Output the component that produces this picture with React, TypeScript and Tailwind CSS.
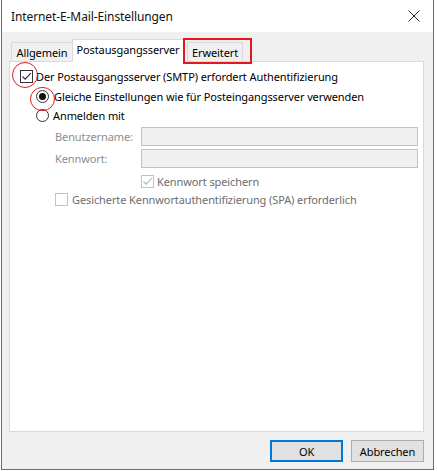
import React from "react";

const font = { fontFamily: '"Noto Sans", "Open Sans", sans-serif' };

function Check({ color = "#333" }: { color?: string }) {
  return (
    <svg width="11" height="11" viewBox="0 0 11 11" className="block">
      <path d="M1.5 5.5 L4.2 8.2 L9.8 2.2" fill="none" stroke={color} strokeWidth="1.2" />
    </svg>
  );
}

export default function App() {
  return (
    <div className="w-[437px] h-[472px] bg-white relative text-[11px] tracking-[-0.1px] text-black" style={font}>
      <div className="ml-[1px] w-[433px] h-[470px] border-x border-b border-[#2b7bd0] flex flex-col">
        {/* title bar */}
        <div className="h-[32px] bg-white flex items-center justify-between pl-[9px] pr-[10px] shrink-0">
          <span className="text-[12px] leading-none mt-[1px] text-[#111]">Internet-E-Mail-Einstellungen</span>
          <svg width="12" height="12" viewBox="0 0 12 12" className="mr-[3px]">
            <path d="M0.5 0.5 L11.5 11.5 M11.5 0.5 L0.5 11.5" stroke="#222" strokeWidth="1" />
          </svg>
        </div>
        {/* body */}
        <div className="flex-1 bg-[#f0f0f0] flex flex-col pl-[7px] pr-[9px]">
          {/* tabs */}
          <div className="h-[29px] flex items-end pl-[2px] relative z-10">
            <div className="h-[19px] w-[62px] border border-b-0 border-[#d9d9d9] bg-[#f0f0f0] flex items-center justify-center">
              <span className="leading-none">Allgemein</span>
            </div>
            <div className="h-[23px] w-[112px] -ml-[1px] border border-b-0 border-[#d9d9d9] bg-white flex items-start justify-center -mb-[1px] pt-[4px]">
              <span className="leading-none">Postausgangsserver</span>
            </div>
            <div className="h-[19px] w-[56px] ml-[3px] border border-b-0 border-[#d9d9d9] bg-[#f0f0f0] flex items-center justify-center relative">
              <span className="leading-none">Erweitert</span>
              <div className="absolute -left-[5px] -top-[5px] w-[69px] h-[26px] border-2 border-[#e3191f]" />
            </div>
          </div>
          {/* panel */}
          <div className="h-[371px] border border-[#d9d9d9] bg-white relative pl-[10px] pt-[4px]">
            <div className="h-[20px] flex items-center">
              <div className="w-[13px] h-[13px] border border-[#333] bg-white flex items-center justify-center">
                <Check />
              </div>
              <span className="ml-[3px] leading-none">Der Postausgangsserver (SMTP) erfordert Authentifizierung</span>
            </div>
            <div className="h-[20px] flex items-center pl-[16px]">
              <div className="w-[13px] h-[13px] rounded-full border border-[#333] bg-white flex items-center justify-center">
                <div className="w-[7px] h-[7px] rounded-full bg-[#111]" />
              </div>
              <span className="ml-[5px] leading-none">Gleiche Einstellungen wie für Posteingangsserver verwenden</span>
            </div>
            <div className="h-[19px] flex items-center pl-[16px]">
              <div className="w-[13px] h-[13px] rounded-full border border-[#333] bg-white" />
              <span className="ml-[4px] leading-none">Anmelden mit</span>
            </div>
            <div className="flex items-center mt-[2px] pl-[35px]">
              <span className="w-[86px] leading-none text-[#8d8d8d]">Benutzername:</span>
              <div className="w-[277px] h-[19px] border border-[#b6c6d8] bg-[#f0f0f0]" />
            </div>
            <div className="flex items-center mt-[3px] pl-[35px]">
              <span className="w-[86px] leading-none text-[#8d8d8d]">Kennwort:</span>
              <div className="w-[277px] h-[19px] border border-[#b6c6d8] bg-[#f0f0f0]" />
            </div>
            <div className="flex items-center mt-[7px] pl-[121px] h-[13px]">
              <div className="w-[13px] h-[13px] border border-[#c2c2c2] bg-white flex items-center justify-center">
                <Check color="#b8b8b8" />
              </div>
              <span className="ml-[3px] leading-none text-[#6d6d6d]">Kennwort speichern</span>
            </div>
            <div className="flex items-center mt-[5px] pl-[35px] h-[13px]">
              <div className="w-[13px] h-[13px] border border-[#c2c2c2] bg-white" />
              <span className="ml-[4px] leading-none text-[#6d6d6d]">Gesicherte Kennwortauthentifizierung (SPA) erforderlich</span>
            </div>
            {/* red annotations */}
            <div className="absolute left-[2px] top-[0px] w-[26px] h-[26px] rounded-full border border-[#e3191f]" />
            <div className="absolute left-[20px] top-[25px] w-[25px] h-[24px] rounded-full border border-[#e3191f]" />
          </div>
          {/* buttons */}
          <div className="flex justify-end mt-[8px] gap-[8px]">
            <button className="w-[73px] h-[22px] border-2 border-[#0078d7] bg-[#e1e1e1] leading-none">OK</button>
            <button className="w-[73px] h-[22px] border border-[#adadad] bg-[#e1e1e1] leading-none">Abbrechen</button>
          </div>
        </div>
      </div>
    </div>
  );
}
